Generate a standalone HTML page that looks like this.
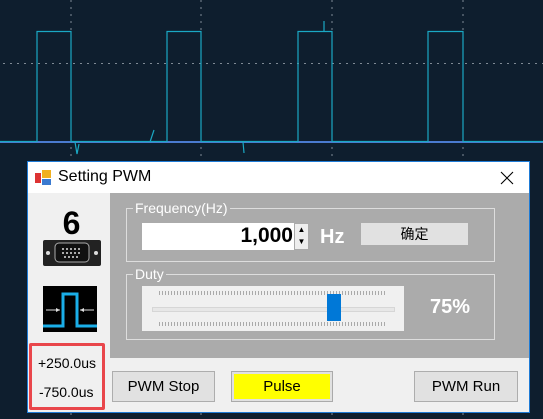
<!DOCTYPE html>
<html><head><meta charset="utf-8"><style>
body{margin:0;width:543px;height:419px;background:#0e1e2e;position:relative;overflow:hidden;font-family:"Liberation Sans","Noto Sans CJK SC",sans-serif}
.a{position:absolute}
.btn{position:absolute;background:#e1e1e1;border:1px solid #adadad;font-size:15px;text-align:center;box-sizing:border-box;color:#000}
</style></head><body>
<svg class="a" style="left:0;top:0" width="543" height="419">
<g stroke="#7f8a95" stroke-width="1" stroke-dasharray="2,5">
<line x1="71" y1="0" x2="71" y2="419"/><line x1="201" y1="0" x2="201" y2="419"/><line x1="332" y1="0" x2="332" y2="419"/><line x1="463" y1="0" x2="463" y2="419"/>
<line x1="3" y1="63.5" x2="543" y2="63.5"/>
</g>
<line x1="0" y1="142" x2="543" y2="142" stroke="#4a7bd0" stroke-width="2"/>
<g fill="none" stroke="#1aa8c4" stroke-width="1.2">
<path d="M0,141.5H37V31.5H71V141.5H167V31.5H201V141.5H298V31.5H332V141.5H428V31.5H463V141.5H543"/>
<path d="M75,142 l2,12 l2,-10 M150,142 l4,-12 M243,142 l1,11 M324,21v10"/>
</g>
</svg>
<div class="a" style="left:27px;top:161px;width:501px;height:250px;border:1px solid #1e7bd6;background:#f0f0f0">
 <div class="a" style="left:0;top:0;width:501px;height:31px;background:#fff"></div>
 <svg class="a" style="left:7px;top:8px" width="16" height="16"><rect x="0" y="3" width="6" height="10" fill="#d33"/><rect x="7" y="0" width="9" height="8" fill="#f0b020"/><rect x="7" y="9" width="9" height="6" fill="#3a7ad0"/></svg>
 <div class="a" style="left:30px;top:6px;font-size:16px;color:#000">Setting PWM</div>
 <svg class="a" style="left:472px;top:9px" width="14" height="14"><path d="M1,1L13,13M13,1L1,13" stroke="#000" stroke-width="1.1"/></svg>
 <div class="a" style="left:82px;top:31px;width:419px;height:165px;background:#ababab"></div>
 <div class="a" style="left:98px;top:46px;width:367px;height:52px;border:1px solid #ddd"></div>
 <div class="a" style="left:105px;top:38px;font-size:14px;color:#fff;background:#ababab;padding:0 2px">Frequency(Hz)</div>
 <div class="a" style="left:114px;top:61px;width:153px;height:27px;background:#fff"></div>
 <div class="a" style="left:114px;top:62px;width:151px;text-align:right;font-size:21px;font-weight:bold;color:#000">1,000</div>
 <div class="a" style="left:266px;top:61px;width:15px;height:27px;background:#eee;border:1px solid #aaa;box-sizing:border-box;font-size:8px;text-align:center;line-height:12px">▲<br>▼</div>
 <div class="a" style="left:292px;top:64px;font-size:20px;font-weight:bold;color:#fff">Hz</div>
 <div class="a" style="left:333px;top:61px;width:107px;height:22px;background:#e1e1e1;font-size:14px;text-align:center;line-height:22px">确定</div>
 <div class="a" style="left:98px;top:112px;width:367px;height:64px;border:1px solid #ddd"></div>
 <div class="a" style="left:105px;top:104px;font-size:14px;color:#fff;background:#ababab;padding:0 2px">Duty</div>
 <div class="a" style="left:114px;top:124px;width:262px;height:45px;background:#f0f0f0"></div>
 <div class="a" style="left:131px;top:129px;width:227px;height:4px;background:repeating-linear-gradient(90deg,#aaa 0 1px,transparent 1px 3px)"></div>
 <div class="a" style="left:131px;top:160px;width:227px;height:4px;background:repeating-linear-gradient(90deg,#aaa 0 1px,transparent 1px 3px)"></div>
 <div class="a" style="left:124px;top:145px;width:241px;height:3px;border:1px solid #d6d6d6;background:#e7e7e7"></div>
 <div class="a" style="left:299px;top:132px;width:14px;height:27px;background:#0078d7"></div>
 <div class="a" style="left:402px;top:134px;font-size:20px;font-weight:bold;color:#fff">75%</div>
 <div class="a" style="left:17px;top:43px;width:53px;text-align:center;font-size:32px;font-weight:bold;color:#000">6</div>
 <svg class="a" style="left:15px;top:78px" width="58" height="26"><rect x="0" y="0" width="58" height="26" rx="2" fill="#222"/><rect x="12" y="3" width="34" height="19" rx="4" fill="#111" stroke="#aaa"/><circle cx="5" cy="13" r="2" fill="#ddd"/><circle cx="53" cy="13" r="2" fill="#ddd"/><g fill="#ddd"><circle cx="20" cy="9" r="1"/><circle cx="24" cy="9" r="1"/><circle cx="28" cy="9" r="1"/><circle cx="32" cy="9" r="1"/><circle cx="36" cy="9" r="1"/><circle cx="20" cy="13" r="1"/><circle cx="24" cy="13" r="1"/><circle cx="28" cy="13" r="1"/><circle cx="32" cy="13" r="1"/><circle cx="36" cy="13" r="1"/><circle cx="22" cy="17" r="1"/><circle cx="26" cy="17" r="1"/><circle cx="30" cy="17" r="1"/><circle cx="34" cy="17" r="1"/></g></svg>
 <svg class="a" style="left:15px;top:124px" width="54" height="46"><rect width="54" height="46" fill="#000"/><path d="M0,40H20V8H34V40H54" fill="none" stroke="#1aaee8" stroke-width="3"/><path d="M3,24H17M37,24H51" stroke="#ddd" stroke-width="1"/><path d="M17,24l-4,-2v4zM37,24l4,-2v4z" fill="#ddd"/></svg>
 <div class="a" style="left:1px;top:181px;width:76px;height:67px;border:3px solid #e9464b;box-sizing:border-box;border-radius:2px"></div>
 <div class="a" style="left:10px;top:193px;font-size:14px">+250.0us</div>
 <div class="a" style="left:11px;top:222px;font-size:14px">-750.0us</div>
 <div class="btn" style="left:84px;top:209px;width:103px;height:31px;line-height:29px">PWM Stop</div>
 <div class="btn" style="left:203px;top:209px;width:102px;height:31px;line-height:29px;background:#ff0;border-color:#aaa;box-shadow:inset 0 0 0 2px #e1e1e1">Pulse</div>
 <div class="btn" style="left:386px;top:209px;width:104px;height:31px;line-height:29px">PWM Run</div>
</div>
</body></html>
